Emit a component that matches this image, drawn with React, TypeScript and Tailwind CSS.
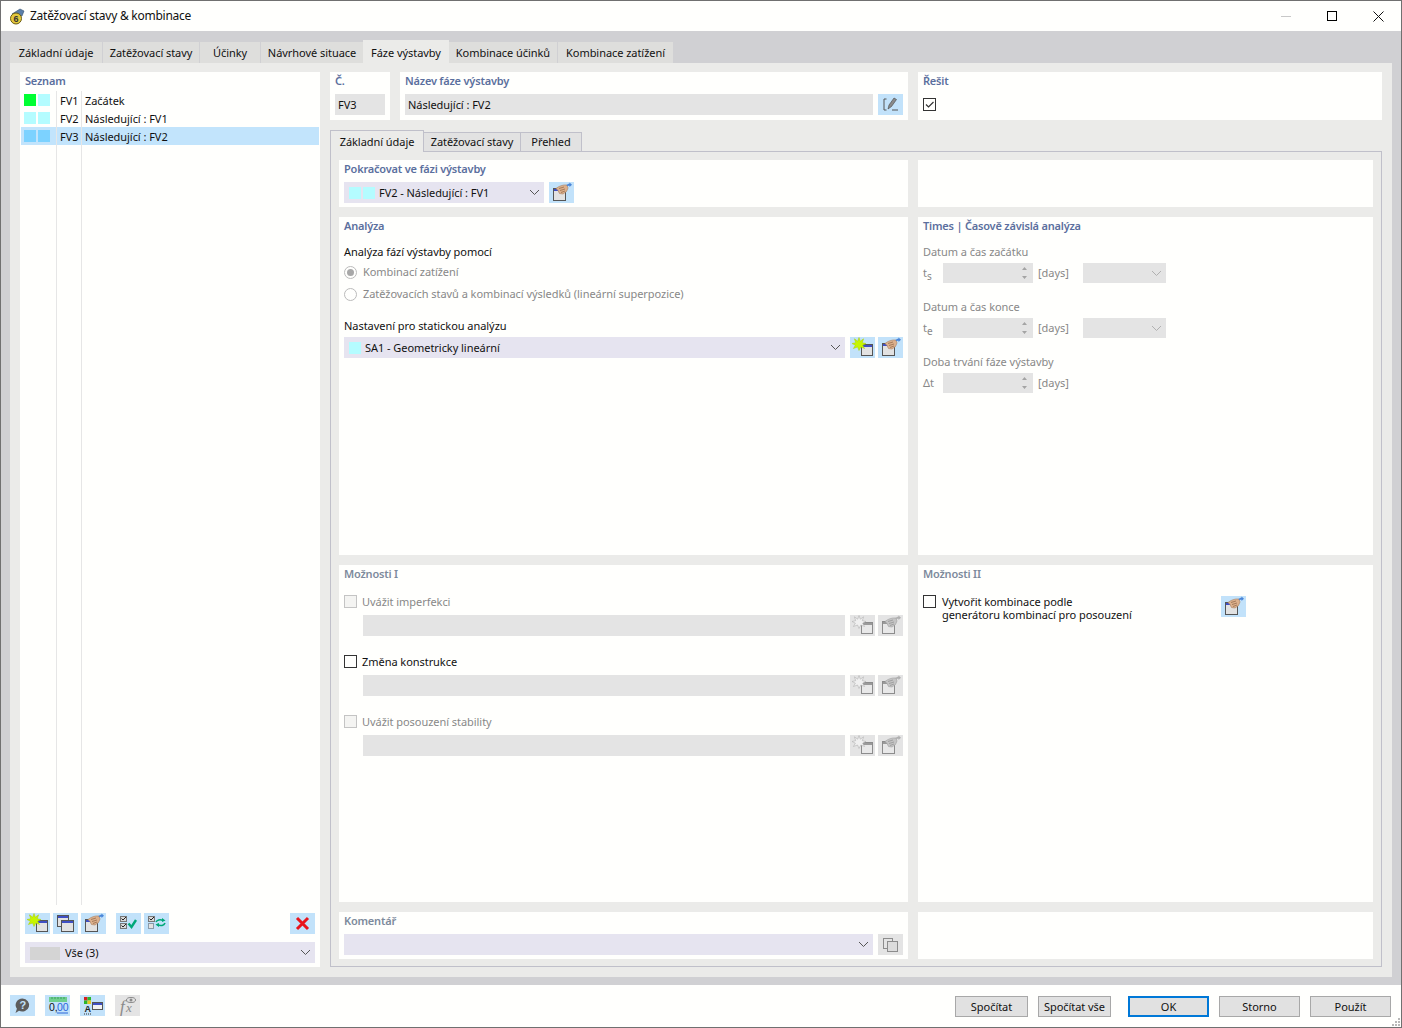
const Chevron = ({ color = "#555" }: { color?: string }) => (
  <svg width="11" height="7" viewBox="0 0 11 7" className="shrink-0">
    <path d="M1 1l4.500 4.500L10 1" fill="none" stroke={color} strokeWidth="1" />
  </svg>
);

const Win = ({ x, y, w, h, off }: { x: number; y: number; w: number; h: number; off?: boolean }) => (
  <g>
    <rect x={x + 0.5} y={y + 0.5} width={w} height={h} fill={off ? "#e8e8e8" : "#e2e2e2"} stroke={off ? "#8c8c8c" : "#555"} />
    <rect x={x + 1} y={y + 1} width={w - 1} height="2" fill={off ? "#9a9a9a" : "#3f4fc4"} />
  </g>
);

const Star = ({ off }: { off?: boolean }) => (
  <polygon
    points="9,0.500 10.300,4.200 13.600,1.800 12.300,5.700 16,6.500 12.600,8.200 14.600,11.500 10.800,10 9,13.500 7.600,10 3.400,11.500 5.400,8.200 2,6.500 5.700,5.700 4.400,1.800 7.700,4.200"
    fill={off ? "#f0f0f0" : "#c6f500"}
    stroke={off ? "#a8a8a8" : "#a8cc00"}
    strokeWidth="0.5"
  />
);

const Hand = ({ off }: { off?: boolean }) => (
  <g>
    <path d="M7 6.500c3-2.500 7-4 11-3.500l1 3-1.500 3.500-3.500 2.500-3.500-.5-1.500-3z" fill={off ? "#c4c4c4" : "#dcb08c"} stroke={off ? "#a0a0a0" : "#a97f60"} strokeWidth="0.6" />
    <path d="M10 6.500l5-1.500M11 8.500l5-1.500M12 10.500l4-1.500" stroke={off ? "#8f8f8f" : "#8c6446"} strokeWidth="0.7" />
    <path d="M17.500 3c1-1 2-1.500 3-1.500v-1l2.500 2.200-2.500 2.300v-1.200c-.8 0-1.400.1-2 .4z" fill={off ? "#b0b0b0" : "#4a86d8"} />
  </g>
);

type IconKind = "new" | "copy" | "edit" | "checkall" | "swap" | "del" | "pen" | "help" | "nums" | "colors" | "fx" | "dup";

const IconBtn = ({ kind, off }: { kind: IconKind; off?: boolean }) => (
  <div className={`w-[25px] h-[21px] shrink-0 ${off ? "bg-[#e4e4e4]" : "bg-[#c2e2fa]"}`}>
    <svg width="25" height="21" viewBox="0 0 25 21">
      {kind === "new" && (
        <>
          <Win x={11} y={7} w={11} h={11} off={off} />
          <Star off={off} />
        </>
      )}
      {kind === "edit" && (
        <>
          <Win x={4} y={6} w={12} h={12} off={off} />
          <Hand off={off} />
        </>
      )}
      {kind === "copy" && (
        <>
          <Win x={4} y={2} w={11} h={11} />
          <Win x={8} y={7} w={12} h={11} />
        </>
      )}
      {kind === "dup" && (
        <>
          <rect x="5.500" y="4.500" width="9" height="10" fill="#e4e4e4" stroke="#8c8c8c" />
          <rect x="9.500" y="7.500" width="10" height="10" fill="#dcdcdc" stroke="#8c8c8c" />
        </>
      )}
      {kind === "checkall" && (
        <>
          <rect x="4.500" y="3.500" width="6" height="5" fill="#d8d8d8" stroke="#777" />
          <rect x="4.500" y="10.500" width="6" height="5" fill="#d8d8d8" stroke="#777" />
          <path d="M5.500 5.500l1.500 1.500 3-3M5.500 12.500l1.500 1.500 3-3" fill="none" stroke="#222" />
          <path d="M12.500 10.500l3 3.500 4.500-7" fill="none" stroke="#00a878" strokeWidth="2.400" />
        </>
      )}
      {kind === "swap" && (
        <>
          <rect x="4.500" y="3.500" width="6" height="5" fill="#d8d8d8" stroke="#777" />
          <rect x="4.500" y="10.500" width="5" height="5" fill="#e2e2e2" stroke="#8a9aa8" />
          <path d="M5.500 5.500l1.500 1.500 3-3" fill="none" stroke="#222" />
          <path d="M12 9c1-2 4-3 7-1.500M21 10c-1 2.500-4 3.500-8 1.500" fill="none" stroke="#00a878" strokeWidth="1.600" />
          <path d="M18 5l3.500 2.500-3.500 1.500zM15 14l-3.500-2.500 3.500-1.500z" fill="#00a878" />
        </>
      )}
      {kind === "del" && <path d="M7 5l11 11M18 5L7 16" stroke="#e8141c" strokeWidth="3" />}
      {kind === "pen" && (
        <>
          <path d="M8.500 5H6v11h2.500M14 16h6" fill="none" stroke="#555" />
          <path d="M10 15l1-4 5-7 2.500 1.500-5 7z" fill="#8a8a8a" stroke="#444" strokeWidth="0.6" />
        </>
      )}
      {kind === "help" && (
        <>
          <path d="M12.500 3.500a7 6.500 0 1 1-3.500 12.300L5.500 18l1.400-4.300a7 6.500 0 0 1 5.600-10.200z" fill="#5c5c5c" />
          <text x="12.800" y="14" textAnchor="middle" fontSize="11" fontWeight="700" fill="#c2e2fa" fontFamily="'Liberation Sans', sans-serif">?</text>
        </>
      )}
      {kind === "nums" && (
        <>
          <rect x="4" y="2" width="18" height="5" fill="#6fcf8e" />
          <path d="M7 2v2M10 2v2M13 2v2M16 2v2M19 2v2" stroke="#3d9c60" />
          <text x="4" y="16" fontSize="10.500" fill="#111" fontFamily="'Liberation Sans', sans-serif">0,</text>
          <text x="12" y="16" fontSize="10.500" fill="#2a66d8" fontFamily="'Liberation Sans', sans-serif">00</text>
          <path d="M12 18h11" stroke="#2a66d8" />
        </>
      )}
      {kind === "colors" && (
        <>
          <rect x="4" y="2" width="3.500" height="3.500" fill="#d42020" />
          <rect x="7.500" y="2" width="3.500" height="3.500" fill="#2cb52c" />
          <rect x="4" y="5.500" width="3.500" height="3.500" fill="#2cb52c" />
          <rect x="7.500" y="5.500" width="3.500" height="3.500" fill="#e8c820" />
          <text x="4.500" y="17" fontSize="9" fontWeight="700" fill="#222" fontFamily="'Liberation Sans', sans-serif">A</text>
          <path d="M4 19h1M6 19h1M8 19h1M10 19h1" stroke="#333" />
          <rect x="12.500" y="7.500" width="10" height="7" fill="#f2f2f2" stroke="#555" />
          <rect x="13" y="8" width="9" height="2" fill="#3f4fc4" />
        </>
      )}
      {kind === "fx" && (
        <>
          <text x="5" y="17" fontSize="17" fontStyle="italic" fill="#8a8a8a" fontFamily="'Liberation Serif', serif">f</text>
          <text x="11" y="17" fontSize="13" fontStyle="italic" fill="#8a8a8a" fontFamily="'Liberation Serif', serif">x</text>
          <ellipse cx="16" cy="5" rx="4.500" ry="2.500" fill="none" stroke="#8a8a8a" />
          <circle cx="16" cy="5" r="1.500" fill="#8a8a8a" />
        </>
      )}
    </svg>
  </div>
);

const Swatch = ({ color }: { color: string }) => <div className="w-[12px] h-[12px] shrink-0" style={{ backgroundColor: color }} />;

const Title = ({ children, muted }: { children: string; muted?: boolean }) => (
  <div className={`h-[18px] leading-[18px] font-semibold tracking-[-0.2px] ${muted ? "text-[#7d8a9c]" : "text-[#5b6f9e]"}`}>{children}</div>
);

const Combo = ({ children, width }: { children: React.ReactNode; width: string }) => (
  <div className={`${width} h-[21px] bg-[#e6e4f0] flex items-center pr-[4px]`}>
    <div className="flex-1 flex items-center min-w-0 pt-px">{children}</div>
    <Chevron />
  </div>
);

const Check = ({ on, off }: { on?: boolean; off?: boolean }) => (
  <div className={`w-[13px] h-[13px] shrink-0 border flex items-center justify-center ${off ? "border-[#c4c4c4] bg-[#f4f4f2]" : "border-[#333]"}`}>
    {on && (
      <svg width="11" height="11" viewBox="0 0 11 11">
        <path d="M2 5.500l2.500 2.500L9.500 3" fill="none" stroke="#333" strokeWidth="1.200" />
      </svg>
    )}
  </div>
);

const Radio = ({ on, children }: { on?: boolean; children: string }) => (
  <div className="h-[22px] flex items-center text-[#888]">
    <div className="w-[13px] h-[13px] rounded-full border border-[#bbb] flex items-center justify-center mr-[6px]">
      {on && <div className="w-[7px] h-[7px] rounded-full bg-[#a8a8a8]" />}
    </div>
    {children}
  </div>
);

const OptionRow = ({ label, disabled, first }: { label: string; disabled?: boolean; first?: boolean }) => (
  <div className={first ? "mt-[11px]" : "mt-[18px]"}>
    <div className={`h-[16px] flex items-start pt-px ${disabled ? "text-[#888]" : ""}`}>
      <Check off={disabled} />
      <span className="ml-[5px] leading-[14px]">{label}</span>
    </div>
    <div className="mt-[5px] flex items-center">
      <div className="ml-[19px] w-[482px] h-[21px] bg-[#e4e4e4]" />
      <div className="ml-[5px] flex gap-[3px]">
        <IconBtn kind="new" off />
        <IconBtn kind="edit" off />
      </div>
    </div>
  </div>
);

const Spin = () => (
  <div className="w-[90px] h-[20px] bg-[#e4e4e4] flex items-center justify-end pr-[5px]">
    <svg width="7" height="14" viewBox="0 0 7 14">
      <path d="M3.500 1L6 4H1zM3.500 13L1 10h5z" fill="#a4a4a4" />
    </svg>
  </div>
);

const TimeRow = ({ sym, sub, select }: { sym: string; sub?: string; select?: boolean }) => (
  <div className="mt-[3px] h-[20px] flex items-center text-[#888]">
    <div className="w-[20px]">
      {sym}
      {sub && <span className="text-[10px] align-sub leading-none">{sub}</span>}
    </div>
    <Spin />
    <span className="ml-[5px] w-[45px]">[days]</span>
    {select && (
      <div className="w-[83px] h-[20px] bg-[#e4e4e4] flex items-center justify-end pr-[4px]">
        <Chevron color="#b0b0b0" />
      </div>
    )}
  </div>
);

const Panel = ({ children, className = "" }: { children?: React.ReactNode; className?: string }) => (
  <div className={`bg-[#fffffd] pl-[5px] ${className}`}>{children}</div>
);

const outerTabs = [
  { label: "Základní údaje", w: "w-[92px]" },
  { label: "Zatěžovací stavy", w: "w-[96px]" },
  { label: "Účinky", w: "w-[60px]" },
  { label: "Návrhové situace", w: "w-[102px]" },
  { label: "Fáze výstavby", w: "w-[86px]", active: true },
  { label: "Kombinace účinků", w: "w-[108px]" },
  { label: "Kombinace zatížení", w: "w-[115px]" },
];

const listRows = [
  { id: "FV1", name: "Začátek", a: "#00ff33", b: "#b4fcff" },
  { id: "FV2", name: "Následující : FV1", a: "#b4fcff", b: "#b4fcff" },
  { id: "FV3", name: "Následující : FV2", a: "#7cd2ff", b: "#7cd2ff", sel: true },
];

export default function App() {
  return (
    <div
      className="relative w-[1402px] h-[1028px] border border-[#707070] bg-[#fffffd] flex flex-col text-[11px] tracking-[-0.05px] text-[#111] overflow-hidden"
      style={{ fontFamily: "'Noto Sans', 'Liberation Sans', sans-serif" }}
    >
      {/* title bar */}
      <div className="h-[30px] shrink-0 flex items-center">
        <svg width="18" height="18" viewBox="0 0 18 18" className="ml-[7px] mr-[4px]">
          <path d="M4 7l8-5 4 2-2 5z" fill="#5b7fa8" stroke="#34506e" strokeWidth="0.6" />
          <circle cx="8" cy="11.500" r="5.500" fill="#e4c93c" stroke="#6b5c14" />
          <text x="8" y="15" textAnchor="middle" fontSize="9" fontWeight="700" fill="#333" fontFamily="'Liberation Sans', sans-serif">6</text>
        </svg>
        <span className="text-[12px] tracking-[-0.25px]">Zatěžovací stavy &amp; kombinace</span>
        <div className="ml-auto flex h-full">
          <div className="w-[46px] flex items-center justify-center">
            <div className="w-[10px] h-px bg-[#c8c8c8]" />
          </div>
          <div className="w-[46px] flex items-center justify-center">
            <div className="w-[10px] h-[10px] border border-black" />
          </div>
          <div className="w-[46px] flex items-center justify-center">
            <svg width="11" height="11" viewBox="0 0 11 11">
              <path d="M0.500 0.500l10 10M10.500 0.500l-10 10" stroke="#111" strokeWidth="1" />
            </svg>
          </div>
        </div>
      </div>

      {/* dialog body */}
      <div className="h-[954px] shrink-0 bg-[#d0d0d3] pl-[9px] pr-[9px] pt-[9px] pb-[8px] flex flex-col">
        <div className="h-[23px] shrink-0 flex items-end">
          {outerTabs.map((t, i) => (
            <div
              key={t.label}
              className={`${t.w} shrink-0 flex items-center justify-center ${i > 0 && !t.active && !outerTabs[i - 1].active ? "ml-px" : ""} ${
                t.active ? "h-[23px] bg-[#ebebe9] pt-[3px]" : "h-[21px] bg-[#dededc] pt-px"
              }`}
            >
              {t.label}
            </div>
          ))}
        </div>

        <div className="flex-1 min-h-0 bg-[#ebebe9] pl-[10px] pr-[10px] pt-[9px] pb-[10px] flex gap-[10px]">
          {/* left list */}
          <div className="w-[300px] shrink-0 bg-[#fffffd] flex flex-col">
            <div className="pl-[5px] h-[19px] leading-[18px] font-semibold tracking-[-0.2px] text-[#5b6f9e]">Seznam</div>
            <div className="flex-1 min-h-0 flex flex-col ml-px mr-px">
              {listRows.map((r) => (
                <div key={r.id} className={`h-[18px] flex items-stretch shrink-0 ${r.sel ? "bg-[#c2e4fc]" : ""}`}>
                  <div className="w-[36px] border-r border-[#e6e6e6] flex items-center gap-[2px] pl-[3px]">
                    <Swatch color={r.a} />
                    <Swatch color={r.b} />
                  </div>
                  <div className="w-[25px] border-r border-[#e6e6e6] flex items-center pl-[3px] pt-[2px]">{r.id}</div>
                  <div className="flex items-center pl-[3px] pt-[2px]">{r.name}</div>
                </div>
              ))}
              <div className="flex-1 flex">
                <div className="w-[36px] border-r border-[#e6e6e6]" />
                <div className="w-[25px] border-r border-[#e6e6e6]" />
              </div>
            </div>
            <div className="mt-[8px] px-[5px] flex items-center">
              <div className="flex gap-[3px]">
                <IconBtn kind="new" />
                <IconBtn kind="copy" />
                <IconBtn kind="edit" />
              </div>
              <div className="ml-[10px] flex gap-[3px]">
                <IconBtn kind="checkall" />
                <IconBtn kind="swap" />
              </div>
              <div className="ml-auto">
                <IconBtn kind="del" />
              </div>
            </div>
            <div className="mt-[8px] mb-[4px] px-[5px]">
              <Combo width="w-full">
                <div className="ml-[5px] w-[30px] h-[13px] bg-[#d4d4d4] mr-[5px]" />
                Vše (3)
              </Combo>
            </div>
          </div>

          {/* right side */}
          <div className="w-[1052px] shrink-0 flex flex-col">
            <div className="h-[48px] shrink-0 flex gap-[10px]">
              <Panel className="w-[60px]">
                <Title>Č.</Title>
                <div className="mt-[4px] w-[50px] h-[21px] bg-[#e4e4e4] flex items-center pl-[3px] pt-[2px]">FV3</div>
              </Panel>
              <Panel className="w-[508px]">
                <Title>Název fáze výstavby</Title>
                <div className="mt-[4px] flex gap-[5px]">
                  <div className="w-[468px] h-[21px] bg-[#e4e4e4] flex items-center pl-[3px] pt-[2px]">Následující : FV2</div>
                  <IconBtn kind="pen" />
                </div>
              </Panel>
              <Panel className="flex-1">
                <Title>Řešit</Title>
                <div className="mt-[8px]">
                  <Check on />
                </div>
              </Panel>
            </div>

            <div className="mt-[10px] h-[22px] shrink-0 flex items-end relative z-10">
              <div className="w-[94px] h-[22px] bg-[#ebebe9] border border-b-0 border-[#c0c0ca] flex items-center justify-center pt-[2px]">Základní údaje</div>
              <div className="w-[97px] h-[20px] bg-[#e2e2e2] border border-l-0 border-[#c0c0ca] flex items-center justify-center">Zatěžovací stavy</div>
              <div className="w-[61px] h-[20px] bg-[#e2e2e2] border border-l-0 border-[#c0c0ca] flex items-center justify-center">Přehled</div>
            </div>

            <div className="flex-1 min-h-0 -mt-px border border-[#c0c0ca] pl-[8px] pt-[8px] grid grid-cols-[569px_455px] grid-rows-[47px_338px_337px_47px] gap-[10px]">
              <Panel>
                <Title>Pokračovat ve fázi výstavby</Title>
                <div className="mt-[4px] flex items-center gap-[5px]">
                  <Combo width="w-[200px]">
                    <div className="ml-[5px] flex gap-[2px] mr-[4px]">
                      <Swatch color="#b4fcff" />
                      <Swatch color="#b4fcff" />
                    </div>
                    FV2 - Následující : FV1
                  </Combo>
                  <IconBtn kind="edit" />
                </div>
              </Panel>
              <Panel />

              <Panel>
                <Title>Analýza</Title>
                <div className="mt-[9px] h-[16px] leading-[16px]">Analýza fází výstavby pomocí</div>
                <div className="mt-px">
                  <Radio on>Kombinací zatížení</Radio>
                  <Radio>Zatěžovacích stavů a kombinací výsledků (lineární superpozice)</Radio>
                </div>
                <div className="mt-[13px] h-[16px] leading-[16px]">Nastavení pro statickou analýzu</div>
                <div className="mt-[3px] flex items-center">
                  <Combo width="w-[501px]">
                    <div className="ml-[5px] mr-[4px]">
                      <Swatch color="#b4fcff" />
                    </div>
                    SA1 - Geometricky lineární
                  </Combo>
                  <div className="ml-[5px] flex gap-[3px]">
                    <IconBtn kind="new" />
                    <IconBtn kind="edit" />
                  </div>
                </div>
              </Panel>
              <Panel>
                <Title>Times | Časově závislá analýza</Title>
                <div className="mt-[9px] h-[16px] leading-[16px] text-[#888]">Datum a čas začátku</div>
                <TimeRow sym="t" sub="s" select />
                <div className="mt-[16px] h-[16px] leading-[16px] text-[#888]">Datum a čas konce</div>
                <TimeRow sym="t" sub="e" select />
                <div className="mt-[16px] h-[16px] leading-[16px] text-[#888]">Doba trvání fáze výstavby</div>
                <TimeRow sym="Δt" />
              </Panel>

              <Panel>
                <Title muted>Možnosti I</Title>
                <OptionRow first disabled label="Uvážit imperfekci" />
                <OptionRow label="Změna konstrukce" />
                <OptionRow disabled label="Uvážit posouzení stability" />
              </Panel>
              <Panel>
                <Title muted>Možnosti II</Title>
                <div className="mt-[11px] flex items-start">
                  <div className="w-[298px] flex items-start">
                    <div className="mt-px">
                      <Check />
                    </div>
                    <div className="ml-[6px] leading-[13px] pt-px">
                      Vytvořit kombinace podle
                      <br />
                      generátoru kombinací pro posouzení
                    </div>
                  </div>
                  <div className="mt-[2px]">
                    <IconBtn kind="edit" />
                  </div>
                </div>
              </Panel>

              <Panel>
                <Title muted>Komentář</Title>
                <div className="mt-[4px] flex gap-[5px]">
                  <Combo width="w-[529px]">{null}</Combo>
                  <IconBtn kind="dup" off />
                </div>
              </Panel>
              <Panel />
            </div>
          </div>
        </div>
      </div>

      {/* footer */}
      <div className="flex-1 pl-[9px] pr-[10px] pt-[10px] flex items-start">
        <div className="flex gap-[10px]">
          <IconBtn kind="help" />
          <IconBtn kind="nums" />
          <IconBtn kind="colors" />
          <IconBtn kind="fx" off />
        </div>
        <div className="ml-auto mt-px flex">
          <button className="w-[73px] h-[21px] pt-px bg-[#e1e1e1] border border-[#a8a8a8]">Spočítat</button>
          <button className="ml-[10px] w-[73px] h-[21px] pt-px bg-[#e1e1e1] border border-[#a8a8a8]">Spočítat vše</button>
          <button className="ml-[17px] w-[81px] h-[21px] pt-px bg-[#e1e1e1] border-2 border-[#0078d7]">OK</button>
          <button className="ml-[10px] w-[81px] h-[21px] pt-px bg-[#e1e1e1] border border-[#a8a8a8]">Storno</button>
          <button className="ml-[10px] w-[81px] h-[21px] pt-px bg-[#e1e1e1] border border-[#a8a8a8]">Použít</button>
        </div>
      </div>

      {/* resize grip */}
      <svg width="10" height="10" viewBox="0 0 10 10" className="absolute right-0 bottom-0">
        <path d="M7 1h2v2H7zM4 4h2v2H4zM7 4h2v2H7zM1 7h2v2H1zM4 7h2v2H4zM7 7h2v2H7z" fill="#b8b8b8" />
      </svg>
    </div>
  );
}
